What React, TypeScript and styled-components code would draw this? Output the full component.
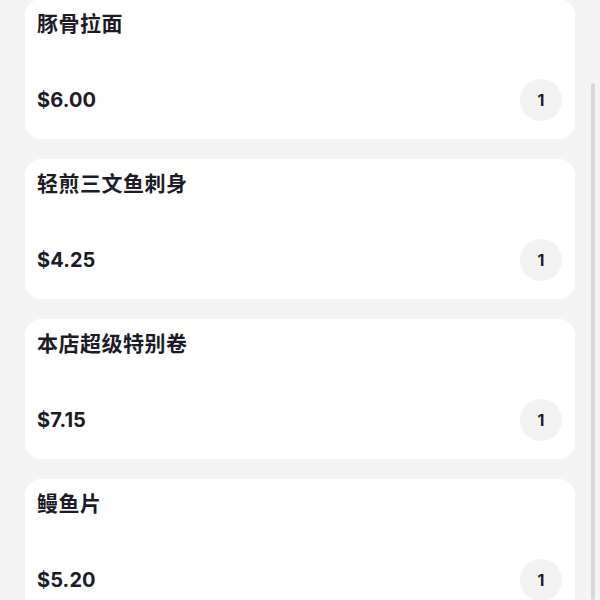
import styled, { createGlobalStyle } from "styled-components"

const GlobalStyle = createGlobalStyle`
  html, body {
    margin: 0;
    padding: 0;
    background: #f4f4f4;
    overflow: hidden;
  }
`

const items = [
    { name: "豚骨拉面", price: "$6.00", qty: 1 },
    { name: "轻煎三文鱼刺身", price: "$4.25", qty: 1 },
    { name: "本店超级特别卷", price: "$7.15", qty: 1 },
    { name: "鳗鱼片", price: "$5.20", qty: 1 },
]

const App = () => {
    return (
        <Page>
            <GlobalStyle />
            <List>
                {items.map((item, index) => (
                    <Card key={index}>
                        <Title>{item.name}</Title>
                        <Bottom>
                            <Price>{item.price}</Price>
                            <Qty>{item.qty}</Qty>
                        </Bottom>
                    </Card>
                ))}
            </List>
            <ScrollThumb />
        </Page>
    )
}

export default App

const Page = styled.div`
  height: 600px;
  overflow: hidden;
  font-family: Inter, "Noto Sans CJK SC", sans-serif;
  color: #1c1b29;
`

const List = styled.div`
  display: flex;
  flex-direction: column;
  gap: 20px;
  padding: 0 25px;
  margin-top: -1px;
`

const Card = styled.div`
  height: 140px;
  box-sizing: border-box;
  background: #ffffff;
  border-radius: 16px;
  padding: 9px 13px 18px 12px;
  display: flex;
  flex-direction: column;
  justify-content: space-between;
`

const Title = styled.div`
  font-family: "Noto Sans CJK SC", sans-serif;
  font-size: 21px;
  font-weight: 600;
  line-height: 28px;
  letter-spacing: 0.5px;
`

const Bottom = styled.div`
  display: flex;
  align-items: center;
  justify-content: space-between;
`

const Price = styled.div`
  font-size: 20px;
  font-weight: 700;
  letter-spacing: 0.1px;
`

const Qty = styled.div`
  width: 42px;
  height: 42px;
  border-radius: 50%;
  background: #f3f3f3;
  display: flex;
  align-items: center;
  justify-content: center;
  font-size: 16px;
  font-weight: 700;
`

const ScrollThumb = styled.div`
  position: fixed;
  right: 5px;
  top: 83px;
  bottom: 0;
  width: 4px;
  border-radius: 2px;
  background: #d8d8d8;
`
